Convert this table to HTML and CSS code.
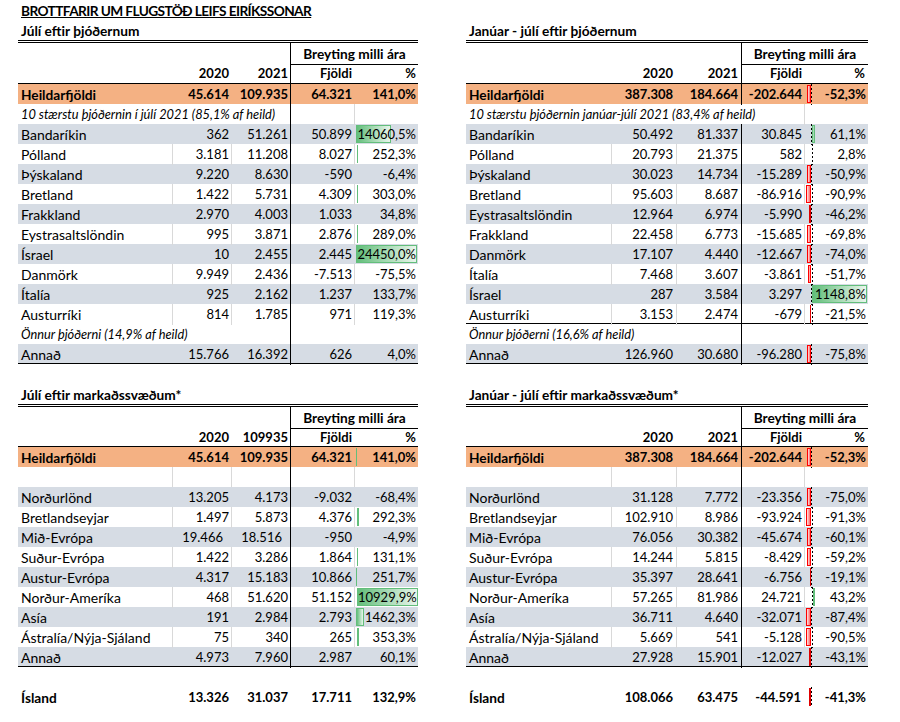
FILE: index.html
```html
<!DOCTYPE html>
<html lang="is">
<head>
<meta charset="utf-8">
<title>Brottfarir um Flugstöð Leifs Eiríkssonar</title>
<link rel="stylesheet" href="styles.css">
</head>
<body>
<div class="page">

  <!-- TOP LEFT -->
  <section class="panel lt">
    <div class="hline title">BROTTFARIR UM FLUGSTÖÐ LEIFS EIRÍKSSONAR</div>
    <div class="hline sub">Júlí eftir þjóðernum</div>
    <div class="tbl">
      <div class="row brey b"><div class="c s3"></div><div class="c k s2 ctr bline">Breyting milli ára</div></div>
      <div class="row hdr h21 b"><div class="c"></div><div class="c n">2020</div><div class="c n">2021</div><div class="c n k">Fjöldi</div><div class="c n">%</div></div>
      <div class="row tot b"><div class="c">Heildarfjöldi</div><div class="c n">45.614</div><div class="c n">109.935</div><div class="c n k">64.321</div><div class="c n">141,0%</div></div>
      <div class="row w it"><div class="c s3 ov">10 stærstu þjóðernin í júlí 2021 (85,1% af heild)</div><div class="c k"></div><div class="c dl"></div></div>
      <div class="row g"><div class="c">Bandaríkin</div><div class="c n">362</div><div class="c n">51.261</div><div class="c n k">50.899</div><div class="c n p"><span class="bar pos" style="width:35px"></span><span class="v">14060,5%</span></div></div>
      <div class="row w"><div class="c">Pólland</div><div class="c n dl">3.181</div><div class="c n dl">11.208</div><div class="c n k">8.027</div><div class="c n dl p"><span class="bar thin" style="width:1px"></span><span class="v">252,3%</span></div></div>
      <div class="row g"><div class="c">Þýskaland</div><div class="c n">9.220</div><div class="c n">8.630</div><div class="c n k">-590</div><div class="c n">-6,4%</div></div>
      <div class="row w"><div class="c">Bretland</div><div class="c n dl">1.422</div><div class="c n dl">5.731</div><div class="c n k">4.309</div><div class="c n dl p"><span class="bar thin" style="width:1px"></span><span class="v">303,0%</span></div></div>
      <div class="row g"><div class="c">Frakkland</div><div class="c n">2.970</div><div class="c n">4.003</div><div class="c n k">1.033</div><div class="c n">34,8%</div></div>
      <div class="row w"><div class="c">Eystrasaltslöndin</div><div class="c n dl">995</div><div class="c n dl">3.871</div><div class="c n k">2.876</div><div class="c n dl p"><span class="bar thin" style="width:1px"></span><span class="v">289,0%</span></div></div>
      <div class="row g"><div class="c">Ísrael</div><div class="c n">10</div><div class="c n">2.455</div><div class="c n k">2.445</div><div class="c n p"><span class="bar pos" style="width:61px"></span><span class="v">24450,0%</span></div></div>
      <div class="row w"><div class="c">Danmörk</div><div class="c n dl">9.949</div><div class="c n dl">2.436</div><div class="c n k">-7.513</div><div class="c n dl">-75,5%</div></div>
      <div class="row g"><div class="c">Ítalía</div><div class="c n">925</div><div class="c n">2.162</div><div class="c n k">1.237</div><div class="c n">133,7%</div></div>
      <div class="row w"><div class="c">Austurríki</div><div class="c n dl">814</div><div class="c n dl">1.785</div><div class="c n k">971</div><div class="c n dl">119,3%</div></div>
      <div class="row w it"><div class="c s3 ov">Önnur þjóðerni (14,9% af heild)</div><div class="c k"></div><div class="c"></div></div>
      <div class="row g last"><div class="c">Annað</div><div class="c n">15.766</div><div class="c n">16.392</div><div class="c n k">626</div><div class="c n">4,0%</div></div>
    </div>
  </section>

  <!-- TOP RIGHT -->
  <section class="panel rt">
    <div class="hline title"></div>
    <div class="hline sub">Janúar - júlí eftir þjóðernum</div>
    <div class="tbl">
      <div class="row brey b"><div class="c s3"></div><div class="c k s2 ctr bline">Breyting milli ára</div></div>
      <div class="row hdr h21 b"><div class="c"></div><div class="c n">2020</div><div class="c n">2021</div><div class="c n k">Fjöldi</div><div class="c n">%</div></div>
      <div class="row tot b"><div class="c">Heildarfjöldi</div><div class="c n">387.308</div><div class="c n">184.664</div><div class="c n k">-202.644</div><div class="c n p"><span class="axis"></span><span class="bar neg" style="width:4px"></span><span class="v">-52,3%</span></div></div>
      <div class="row w it"><div class="c s4 ov">10 stærstu þjóðernin janúar-júlí 2021 (83,4% af heild)</div><div class="c dl"></div></div>
      <div class="row g"><div class="c">Bandaríkin</div><div class="c n">50.492</div><div class="c n">81.337</div><div class="c n k">30.845</div><div class="c n p"><span class="axis"></span><span class="bar pos" style="width:3px"></span><span class="v">61,1%</span></div></div>
      <div class="row w"><div class="c">Pólland</div><div class="c n dl">20.793</div><div class="c n dl">21.375</div><div class="c n k">582</div><div class="c n dl p"><span class="axis"></span><span class="v">2,8%</span></div></div>
      <div class="row g"><div class="c">Þýskaland</div><div class="c n">30.023</div><div class="c n">14.734</div><div class="c n k">-15.289</div><div class="c n p"><span class="axis"></span><span class="bar neg" style="width:4px"></span><span class="v">-50,9%</span></div></div>
      <div class="row w"><div class="c">Bretland</div><div class="c n dl">95.603</div><div class="c n dl">8.687</div><div class="c n k">-86.916</div><div class="c n dl p"><span class="axis"></span><span class="bar neg" style="width:5px"></span><span class="v">-90,9%</span></div></div>
      <div class="row g"><div class="c">Eystrasaltslöndin</div><div class="c n">12.964</div><div class="c n">6.974</div><div class="c n k">-5.990</div><div class="c n p"><span class="axis"></span><span class="bar negthin" style="width:2px"></span><span class="v">-46,2%</span></div></div>
      <div class="row w"><div class="c">Frakkland</div><div class="c n dl">22.458</div><div class="c n dl">6.773</div><div class="c n k">-15.685</div><div class="c n dl p"><span class="axis"></span><span class="bar neg" style="width:4px"></span><span class="v">-69,8%</span></div></div>
      <div class="row g"><div class="c">Danmörk</div><div class="c n">17.107</div><div class="c n">4.440</div><div class="c n k">-12.667</div><div class="c n p"><span class="axis"></span><span class="bar neg" style="width:4px"></span><span class="v">-74,0%</span></div></div>
      <div class="row w"><div class="c">Ítalía</div><div class="c n dl">7.468</div><div class="c n dl">3.607</div><div class="c n k">-3.861</div><div class="c n dl p"><span class="axis"></span><span class="bar neg" style="width:3px"></span><span class="v">-51,7%</span></div></div>
      <div class="row g"><div class="c">Ísrael</div><div class="c n">287</div><div class="c n">3.584</div><div class="c n k">3.297</div><div class="c n p"><span class="axis"></span><span class="bar pos" style="width:55px"></span><span class="v">1148,8%</span></div></div>
      <div class="row w sep"><div class="c">Austurríki</div><div class="c n dl">3.153</div><div class="c n dl">2.474</div><div class="c n k">-679</div><div class="c n dl p"><span class="axis"></span><span class="bar negthin" style="width:1px"></span><span class="v">-21,5%</span></div></div>
      <div class="row w it"><div class="c s3 ov">Önnur þjóðerni (16,6% af heild)</div><div class="c k"></div><div class="c"></div></div>
      <div class="row g last"><div class="c">Annað</div><div class="c n">126.960</div><div class="c n">30.680</div><div class="c n k">-96.280</div><div class="c n p"><span class="axis"></span><span class="bar neg" style="width:4px"></span><span class="v">-75,8%</span></div></div>
    </div>
  </section>

  <!-- BOTTOM LEFT -->
  <section class="panel lb">
    <div class="hline title"></div>
    <div class="hline sub">Júlí eftir markaðssvæðum*</div>
    <div class="tbl">
      <div class="row brey b"><div class="c s3"></div><div class="c k s2 ctr bline">Breyting milli ára</div></div>
      <div class="row hdr b"><div class="c"></div><div class="c n">2020</div><div class="c n">109935</div><div class="c n k">Fjöldi</div><div class="c n">%</div></div>
      <div class="row tot b"><div class="c">Heildarfjöldi</div><div class="c n">45.614</div><div class="c n">109.935</div><div class="c n k">64.321</div><div class="c n p"><span class="bar thin" style="width:1px"></span><span class="v">141,0%</span></div></div>
      <div class="row w"><div class="c"></div><div class="c dl"></div><div class="c dl"></div><div class="c k"></div><div class="c dl"></div></div>
      <div class="row g"><div class="c">Norðurlönd</div><div class="c n">13.205</div><div class="c n">4.173</div><div class="c n k">-9.032</div><div class="c n">-68,4%</div></div>
      <div class="row w"><div class="c">Bretlandseyjar</div><div class="c n dl">1.497</div><div class="c n dl">5.873</div><div class="c n k">4.376</div><div class="c n dl p"><span class="bar thin" style="width:2px"></span><span class="v">292,3%</span></div></div>
      <div class="row g"><div class="c">Mið-Evrópa</div><div class="c n ind">19.466</div><div class="c n ind">18.516</div><div class="c n k">-950</div><div class="c n">-4,9%</div></div>
      <div class="row w"><div class="c">Suður-Evrópa</div><div class="c n dl">1.422</div><div class="c n dl">3.286</div><div class="c n k">1.864</div><div class="c n dl p"><span class="bar thin" style="width:1px"></span><span class="v">131,1%</span></div></div>
      <div class="row g"><div class="c">Austur-Evrópa</div><div class="c n">4.317</div><div class="c n">15.183</div><div class="c n k">10.866</div><div class="c n p"><span class="bar thin" style="width:1px"></span><span class="v">251,7%</span></div></div>
      <div class="row w"><div class="c">Norður-Ameríka</div><div class="c n dl">468</div><div class="c n dl">51.620</div><div class="c n k">51.152</div><div class="c n dl p"><span class="bar pos" style="width:61px"></span><span class="v">10929,9%</span></div></div>
      <div class="row g"><div class="c">Asía</div><div class="c n">191</div><div class="c n">2.984</div><div class="c n k">2.793</div><div class="c n p"><span class="bar pos" style="width:8px"></span><span class="v">1462,3%</span></div></div>
      <div class="row w"><div class="c">Ástralía/Nýja-Sjáland</div><div class="c n dl">75</div><div class="c n dl">340</div><div class="c n k">265</div><div class="c n dl p"><span class="bar thin" style="width:2px"></span><span class="v">353,3%</span></div></div>
      <div class="row g last"><div class="c">Annað</div><div class="c n">4.973</div><div class="c n">7.960</div><div class="c n k">2.987</div><div class="c n">60,1%</div></div>
      <div class="row blank"></div>
      <div class="row b"><div class="c">Ísland</div><div class="c n">13.326</div><div class="c n">31.037</div><div class="c n">17.711</div><div class="c n">132,9%</div></div>
    </div>
  </section>

  <!-- BOTTOM RIGHT -->
  <section class="panel rb">
    <div class="hline title"></div>
    <div class="hline sub">Janúar - júlí eftir markaðssvæðum*</div>
    <div class="tbl">
      <div class="row brey b"><div class="c s3"></div><div class="c k s2 ctr bline">Breyting milli ára</div></div>
      <div class="row hdr b"><div class="c"></div><div class="c n">2020</div><div class="c n">2021</div><div class="c n k">Fjöldi</div><div class="c n">%</div></div>
      <div class="row tot b"><div class="c">Heildarfjöldi</div><div class="c n">387.308</div><div class="c n">184.664</div><div class="c n k">-202.644</div><div class="c n p"><span class="axis"></span><span class="bar neg" style="width:4px"></span><span class="v">-52,3%</span></div></div>
      <div class="row w"><div class="c"></div><div class="c dl"></div><div class="c dl"></div><div class="c k"></div><div class="c dl"></div></div>
      <div class="row g"><div class="c">Norðurlönd</div><div class="c n">31.128</div><div class="c n">7.772</div><div class="c n k">-23.356</div><div class="c n p"><span class="axis"></span><span class="bar neg" style="width:4px"></span><span class="v">-75,0%</span></div></div>
      <div class="row w"><div class="c">Bretlandseyjar</div><div class="c n dl">102.910</div><div class="c n dl">8.986</div><div class="c n k">-93.924</div><div class="c n dl p"><span class="axis"></span><span class="bar neg" style="width:5px"></span><span class="v">-91,3%</span></div></div>
      <div class="row g"><div class="c">Mið-Evrópa</div><div class="c n">76.056</div><div class="c n">30.382</div><div class="c n k">-45.674</div><div class="c n p"><span class="axis"></span><span class="bar neg" style="width:4px"></span><span class="v">-60,1%</span></div></div>
      <div class="row w"><div class="c">Suður-Evrópa</div><div class="c n dl">14.244</div><div class="c n dl">5.815</div><div class="c n k">-8.429</div><div class="c n dl p"><span class="axis"></span><span class="bar neg" style="width:4px"></span><span class="v">-59,2%</span></div></div>
      <div class="row g"><div class="c">Austur-Evrópa</div><div class="c n">35.397</div><div class="c n">28.641</div><div class="c n k">-6.756</div><div class="c n p"><span class="axis"></span><span class="bar negthin" style="width:1px"></span><span class="v">-19,1%</span></div></div>
      <div class="row w"><div class="c">Norður-Ameríka</div><div class="c n dl">57.265</div><div class="c n dl">81.986</div><div class="c n k">24.721</div><div class="c n dl p"><span class="axis"></span><span class="bar thin" style="width:2px"></span><span class="v">43,2%</span></div></div>
      <div class="row g"><div class="c">Asía</div><div class="c n">36.711</div><div class="c n">4.640</div><div class="c n k">-32.071</div><div class="c n p"><span class="axis"></span><span class="bar neg" style="width:5px"></span><span class="v">-87,4%</span></div></div>
      <div class="row w"><div class="c">Ástralía/Nýja-Sjáland</div><div class="c n dl">5.669</div><div class="c n dl">541</div><div class="c n k">-5.128</div><div class="c n dl p"><span class="axis"></span><span class="bar neg" style="width:5px"></span><span class="v">-90,5%</span></div></div>
      <div class="row g last"><div class="c">Annað</div><div class="c n">27.928</div><div class="c n">15.901</div><div class="c n k">-12.027</div><div class="c n p"><span class="axis"></span><span class="bar negthin" style="width:2px"></span><span class="v">-43,1%</span></div></div>
      <div class="row blank"></div>
      <div class="row b"><div class="c">Ísland</div><div class="c n">108.066</div><div class="c n">63.475</div><div class="c n">-44.591</div><div class="c n p"><span class="axis"></span><span class="bar negthin" style="width:2px"></span><span class="v">-41,3%</span></div></div>
    </div>
  </section>

</div>
</body>
</html>
```

FILE: styles.css
```css
html, body {
  margin: 0;
  padding: 0;
  background: #ffffff;
}

body {
  font-family: Lato, "Open Sans", "DejaVu Sans", sans-serif;
  font-size: 14px;
  color: #000000;
}

.page {
  display: grid;
  grid-template-columns: 400px 402px;
  column-gap: 48px;
  padding-left: 18px;
}

.panel {
  display: flex;
  flex-direction: column;
}

.hline {
  height: 20px;
  line-height: 21px;
  padding-left: 3px;
  font-weight: 700;
  font-size: 13.7px;
  white-space: nowrap;
}

.title {
  text-decoration: underline;
  text-underline-offset: 1px;
  letter-spacing: -0.6px;
}

.tbl {
  border-top: 3px double #000000;
}

.row {
  display: grid;
  height: 20px;
  box-sizing: border-box;
}

.lt .row, .lb .row {
  grid-template-columns: 154px 59px 59px 64px 64px;
}

.rt .row, .rb .row {
  grid-template-columns: 145px 65px 65px 63px 64px;
}

.row.h21 {
  height: 21px;
}

.c {
  box-sizing: border-box;
  height: 100%;
  line-height: 21px;
  padding: 0 2px 0 3px;
  white-space: nowrap;
  overflow: visible;
}

.b .c {
  font-size: 13.7px;
}

.n,
.b .n {
  text-align: right;
  padding-right: 2px;
  font-size: 13px;
}

.rt .n, .rb .n {
  padding-right: 3px;
}

.rt .k, .rb .k, .rt .p, .rb .p {
  padding-right: 2px;
}

.ind {
  padding-right: 8px;
}

.ctr,
.b .ctr {
  text-align: center;
  padding: 0;
  font-size: 13.7px;
}

.s2 { grid-column: span 2; }
.s3 { grid-column: span 3; }
.s4 { grid-column: span 4; }

.b {
  font-weight: 700;
}

.k { border-left: 1px solid #000000; }

.bline { border-bottom: 1px solid #000000; }

.hdr { border-bottom: 1px solid #000000; }

.last, .sep { border-bottom: 1px solid #000000; }

.tot { background: #F4B183; }

.g { background: #D6DCE4; }

.w .dl { border-left: 1px solid #D9D9D9; }

.it .c {
  font-style: italic;
  font-size: 12.8px;
}

.ov { position: relative; z-index: 1; }

/* data bars */
.p { position: relative; }

.v { position: relative; }

.bar {
  position: absolute;
  top: 1px;
  bottom: 2px;
  box-sizing: border-box;
}

.bar.pos {
  left: 2px;
  border: 1px solid #63BE7B;
  background: linear-gradient(to right, #63BE7B, #E9F5EC);
}

.bar.thin {
  left: 2px;
  background: #63BE7B;
}

.rt .bar.pos, .rb .bar.pos, .rt .bar.thin, .rb .bar.thin {
  left: 8px;
}

.bar.neg {
  right: 57px;
  border: 1px solid #FF0000;
  background: linear-gradient(to left, #FF6A6A, #FFE3E3);
}

.bar.negthin {
  right: 57px;
  background: #E00000;
}

.axis {
  position: absolute;
  left: 7px;
  top: 0;
  bottom: 0;
  width: 1px;
  background: repeating-linear-gradient(to bottom, #000000 0 2px, transparent 2px 4px);
}
```
